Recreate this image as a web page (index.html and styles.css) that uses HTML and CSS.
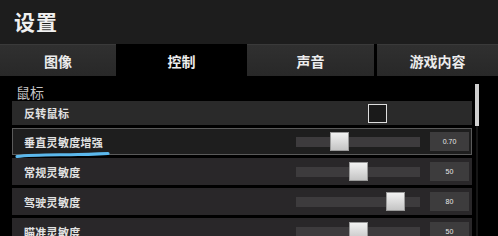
FILE: index.html
```html
<!DOCTYPE html>
<html lang="zh">
<head>
<meta charset="utf-8">
<link rel="stylesheet" href="styles.css">
</head>
<body>
<div class="page">
  <header class="titlebar"><h1 class="title">设置</h1></header>
  <nav class="tabs">
    <div class="tab t1">图像</div>
    <div class="tab t2 active">控制</div>
    <div class="tab t3">声音</div>
    <div class="tab t4">游戏内容</div>
  </nav>
  <main class="content">
    <div class="section-title">鼠标</div>
    <div class="rows">
      <div class="row short">
        <span class="label">反转鼠标</span>
        <span class="checkbox"></span>
      </div>
      <div class="row selected">
        <span class="label">垂直灵敏度增强</span>
        <span class="track"><span class="thumb" style="left:34px"></span></span>
        <span class="value">0.70</span>
        <svg class="scribble" width="100" height="10" viewBox="0 0 100 10">
          <path d="M4 7.5 C 20 5.5, 45 6, 65 5.5 S 88 4.5, 95 4.5" fill="none" stroke="#5bb8ec" stroke-width="3.2" stroke-linecap="round"/>
        </svg>
      </div>
      <div class="row">
        <span class="label">常规灵敏度</span>
        <span class="track"><span class="thumb" style="left:53px"></span></span>
        <span class="value">50</span>
      </div>
      <div class="row">
        <span class="label">驾驶灵敏度</span>
        <span class="track"><span class="thumb" style="left:90px"></span></span>
        <span class="value">80</span>
      </div>
      <div class="row">
        <span class="label">瞄准灵敏度</span>
        <span class="track"><span class="thumb" style="left:53px"></span></span>
        <span class="value">50</span>
      </div>
    </div>
    <div class="scrollbar"><div class="scroll-thumb"></div></div>
  </main>
</div>
</body>
</html>
```

FILE: styles.css
```css
* { box-sizing: border-box; margin: 0; padding: 0; }
html, body {
  width: 498px;
  height: 236px;
  overflow: hidden;
  background: #000;
  font-family: "Noto Sans CJK SC", "Noto Sans", sans-serif;
  color: #e6e6e6;
}
.page { position: relative; width: 498px; height: 236px; }
.titlebar {
  height: 44px;
  background: #1d1d1d;
  padding-left: 14px;
  display: flex;
  align-items: center;
}
.title {
  font-size: 21px;
  font-weight: 700;
  color: #f0f0f0;
  letter-spacing: 1px;
  line-height: 1;
  margin-top: -2px;
}
.tabs {
  display: grid;
  grid-template-columns: 116px 131px 127px 124px;
  height: 32px;
  background: #000;
}
.tab {
  display: flex;
  align-items: center;
  justify-content: center;
  font-size: 14px;
  font-weight: 700;
  color: #ececec;
  background: linear-gradient(#303030, #282828);
  border-top: 1px solid #3a3a3a;
}
.tab.t4 { margin-left: 3px; }
.tab.active { background: #000; border-top-color: #000; }
.content { position: relative; padding: 0 26px 0 12px; }
.section-title {
  height: 25px;
  padding-left: 4px;
  font-size: 14px;
  color: #c4c4c4;
  display: flex;
  align-items: center;
  padding-top: 6px;
}
.rows { display: flex; flex-direction: column; gap: 3px; }
.row {
  position: relative;
  height: 27px;
  display: grid;
  grid-template-columns: 1fr 124px 39px;
  column-gap: 10px;
  align-items: center;
  padding: 0 3px 0 12px;
  background: #292729;
}
.row.short { height: 24px; background: #2a2a2a; }
.row.selected { background: #1e1e1e; border: 1px solid #5a5a5a; padding-left: 11px; padding-right: 2px; }
.label { font-size: 11px; font-weight: 700; color: #e2e2e2; letter-spacing: 0.3px; }
.checkbox {
  grid-column: 2;
  margin-left: 72px;
  width: 19px;
  height: 19px;
  border: 1.5px solid #dedede;
  background: #1a1a1a;
}
.track {
  position: relative;
  height: 10px;
  background: #3d3b3d;
}
.thumb {
  position: absolute;
  top: -5px;
  width: 19px;
  height: 19px;
  background: linear-gradient(#f2f2f2, #c4c4c4);
  border: 1px solid #9a9a9a;
}
.value {
  height: 19px;
  background: #3d3c3d;
  display: flex;
  align-items: center;
  justify-content: center;
  font-family: "Liberation Sans", sans-serif;
  font-size: 7px;
  color: #e8e8e8;
}
.scribble { position: absolute; left: 0; top: 20px; }
.scrollbar {
  position: absolute;
  left: 475px;
  top: 8px;
  width: 4px;
  height: 160px;
  background: linear-gradient(90deg, transparent 1px, #161616 1px, #161616 3px, transparent 3px);
}
.scroll-thumb { width: 4px; height: 42px; background: #cfcfcf; }
```
